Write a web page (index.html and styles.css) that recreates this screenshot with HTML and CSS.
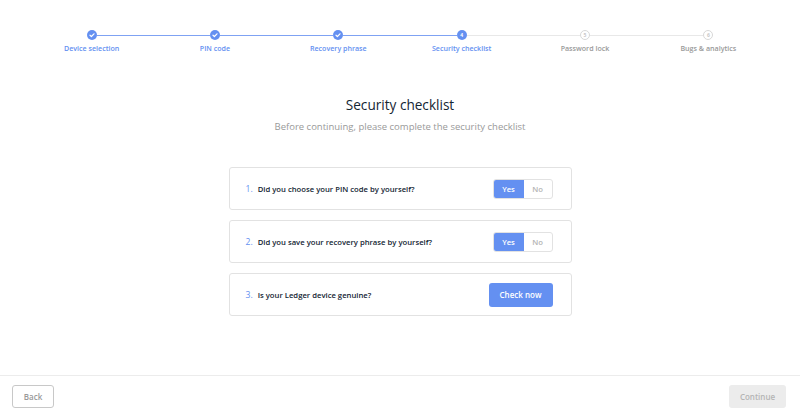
FILE: index.html
```html
<!DOCTYPE html>
<html>
<head>
<meta charset="utf-8">
<link rel="stylesheet" href="styles.css">
</head>
<body>
<div class="app">
  <div class="stepper">
    <div class="step done">
      <div class="track"><span class="line off"></span><span class="dot"><svg viewBox="0 0 10 10"><path d="M3 5.2 L4.4 6.5 L7 3.8" fill="none" stroke="#fff" stroke-width="1.2" stroke-linecap="round" stroke-linejoin="round"/></svg></span><span class="line on"></span></div>
      <div class="label">Device selection</div>
    </div>
    <div class="step done">
      <div class="track"><span class="line on"></span><span class="dot"><svg viewBox="0 0 10 10"><path d="M3 5.2 L4.4 6.5 L7 3.8" fill="none" stroke="#fff" stroke-width="1.2" stroke-linecap="round" stroke-linejoin="round"/></svg></span><span class="line on"></span></div>
      <div class="label">PIN code</div>
    </div>
    <div class="step done">
      <div class="track"><span class="line on"></span><span class="dot"><svg viewBox="0 0 10 10"><path d="M3 5.2 L4.4 6.5 L7 3.8" fill="none" stroke="#fff" stroke-width="1.2" stroke-linecap="round" stroke-linejoin="round"/></svg></span><span class="line on"></span></div>
      <div class="label">Recovery phrase</div>
    </div>
    <div class="step active">
      <div class="track"><span class="line on"></span><span class="dot">4</span><span class="line grey"></span></div>
      <div class="label">Security checklist</div>
    </div>
    <div class="step todo">
      <div class="track"><span class="line grey"></span><span class="dot">5</span><span class="line grey"></span></div>
      <div class="label">Password lock</div>
    </div>
    <div class="step todo">
      <div class="track"><span class="line grey"></span><span class="dot">6</span><span class="line off"></span></div>
      <div class="label">Bugs &amp; analytics</div>
    </div>
  </div>

  <main class="content">
    <h1 class="title">Security checklist</h1>
    <p class="subtitle">Before continuing, please complete the security checklist</p>

    <div class="cards">
      <div class="card">
        <div class="question"><span class="num">1.</span>Did you choose your PIN code by yourself?</div>
        <div class="toggle"><span class="opt sel">Yes</span><span class="opt">No</span></div>
      </div>
      <div class="card">
        <div class="question"><span class="num">2.</span>Did you save your recovery phrase by yourself?</div>
        <div class="toggle"><span class="opt sel">Yes</span><span class="opt">No</span></div>
      </div>
      <div class="card">
        <div class="question"><span class="num">3.</span>Is your Ledger device genuine?</div>
        <button class="check">Check now</button>
      </div>
    </div>
  </main>

  <footer class="footer">
    <button class="btn back">Back</button>
    <button class="btn continue">Continue</button>
  </footer>
</div>
</body>
</html>
```

FILE: styles.css
```css
* { box-sizing: border-box; }
html, body { margin: 0; padding: 0; }
body {
  width: 800px;
  height: 414px;
  background: #fff;
  font-family: "Open Sans", "Noto Sans", sans-serif;
  color: #142533;
  overflow: hidden;
}
.app {
  height: 414px;
  display: flex;
  flex-direction: column;
}
.stepper {
  display: grid;
  grid-template-columns: repeat(6, 1fr);
  padding: 30px 30px 0;
}
.step { display: flex; flex-direction: column; align-items: center; }
.track { display: flex; align-items: center; width: 100%; height: 10px; }
.line { flex: 1; height: 1px; }
.line.on { background: #7fa2f3; }
.line.grey { background: #e8e8e8; }
.line.off { background: transparent; }
.dot {
  width: 10px; height: 10px; border-radius: 50%;
  display: flex; align-items: center; justify-content: center;
  font-size: 5px; font-weight: 700; line-height: 1;
  flex: none;
}
.dot svg { width: 10px; height: 10px; }
.done .dot, .active .dot { background: #6490f1; color: #fff; }
.todo .dot { border: 1px solid #d8d8d8; color: #c8c8c8; background: #fff; }
.label {
  margin-top: 3px;
  font-size: 7.1px;
  font-weight: 600;
  line-height: 10px;
  white-space: nowrap;
}
.done .label, .active .label { color: #6490f1; }
.todo .label { color: #999; }

.content {
  flex: 1;
  display: flex;
  flex-direction: column;
  align-items: center;
}
.title {
  margin: 42px 0 0;
  font-family: "Open Sans", sans-serif;
  font-weight: 400;
  font-size: 13.6px;
  line-height: 19px;
  color: #142533;
}
.subtitle {
  margin: 6px 0 0;
  font-size: 9.5px;
  line-height: 14px;
  color: #999;
}
.cards {
  margin-top: 33px;
  width: 343px;
  display: flex;
  flex-direction: column;
  gap: 10px;
}
.card {
  height: 43px;
  border: 1px solid #e2e2e2;
  border-radius: 3px;
  display: flex;
  align-items: center;
  justify-content: space-between;
  padding: 0 18px 0 16px;
}
.question {
  font-size: 7.7px;
  font-weight: 600;
  color: #142533;
}
.num { color: #6490f1; font-weight: 400; margin-right: 5px; font-size: 8.6px; }
.toggle {
  display: flex;
  border: 1px solid #e2e2e2;
  border-radius: 3px;
  overflow: hidden;
  height: 20px;
}
.opt {
  width: 30px;
  display: flex; align-items: center; justify-content: center;
  font-size: 7.7px; font-weight: 600;
  color: #b4b4b4;
}
.opt + .opt { width: 28px; }
.opt.sel { background: #6490f1; color: #fff; }
.check {
  width: 64px; height: 24px;
  border: none; border-radius: 3px;
  background: #6490f1; color: #fff;
  font-family: "Open Sans", sans-serif;
  font-size: 8px; font-weight: 600;
  padding: 0;
}
.footer {
  height: 39px;
  border-top: 1px solid #ececec;
  display: flex;
  align-items: flex-start;
  justify-content: space-between;
  padding: 9px 14px 0 12px;
}
.btn {
  height: 23px;
  border-radius: 3px;
  font-family: "Open Sans", sans-serif;
  font-size: 8px; font-weight: 600;
  padding: 0;
}
.back { width: 42px; border: 1px solid #c8c8c8; background: #fff; color: #999; }
.continue { width: 57px; border: none; background: #ececec; color: #b4b4b4; }
```
